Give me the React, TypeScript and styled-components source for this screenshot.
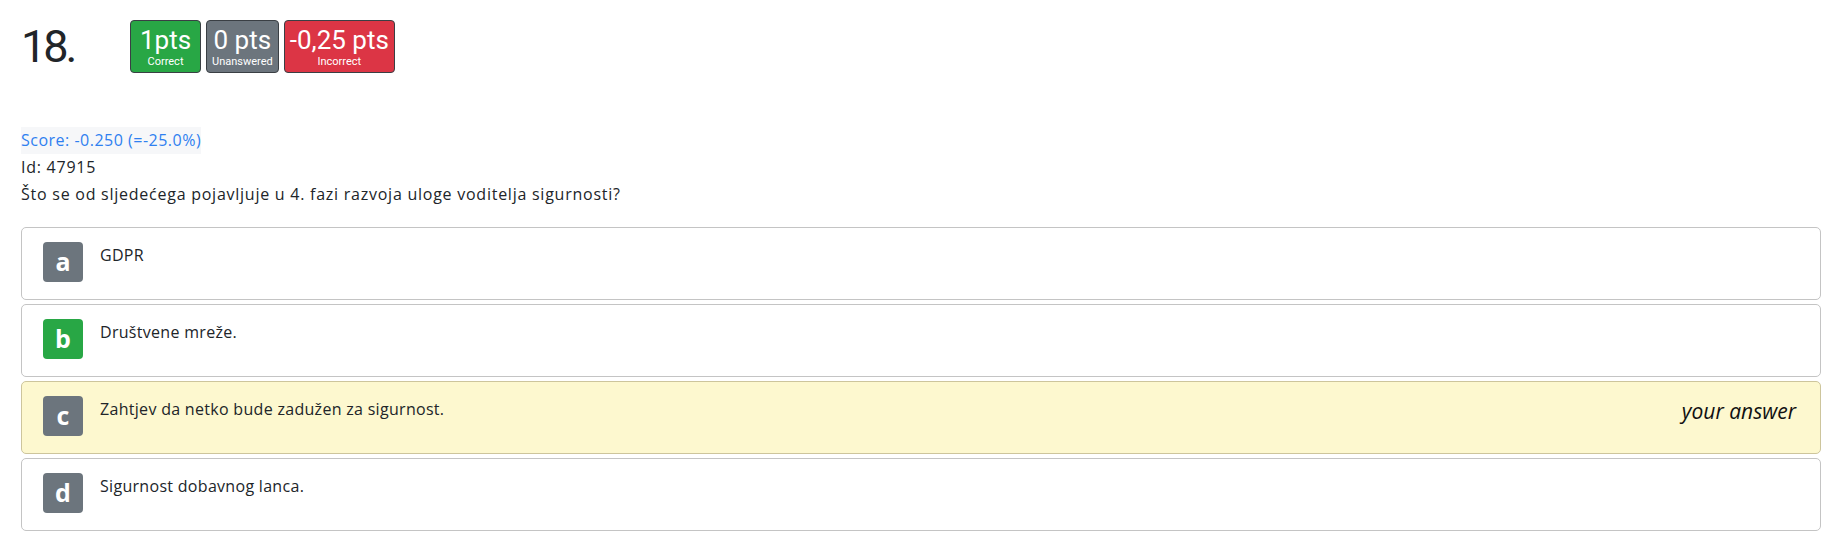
import React from "react";
import styled, { createGlobalStyle } from "styled-components";

const GlobalStyle = createGlobalStyle`
  html, body { margin: 0; padding: 0; background: #fff; }
  body {
    font-family: "Open Sans", "Noto Sans", Arial, sans-serif;
    color: #212529;
    font-size: 16px;
  }
`;

const Page = styled.div`
  padding: 20px 15px 0 21px;
  width: 1800px;
`;

const Header = styled.div`
  display: flex;
  align-items: center;
  height: 53px;
`;

const Title = styled.h1`
  margin: 0;
  width: 109px;
  font-family: Roboto, sans-serif;
  font-weight: 400;
  font-size: 45px;
  letter-spacing: -3px;
  line-height: 53px;
  color: #212529;
`;

const PtsRow = styled.div`
  display: flex;
  gap: 5px;
`;

const PtsBox = styled.div<{ $bg: string; $min?: number }>`
  box-sizing: border-box;
  height: 53px;
  min-width: ${(p) => p.$min ?? 0}px;
  padding: 0 5px;
  display: flex;
  flex-direction: column;
  align-items: center;
  background: ${(p) => p.$bg};
  border: 1px solid #3a3f44;
  border-radius: 4px;
  color: #fff;
  font-family: Roboto, sans-serif;
`;

const PtsValue = styled.div`
  font-size: 26px;
  line-height: 32px;
  margin-top: 3px;
  white-space: nowrap;
`;

const PtsLabel = styled.div`
  font-size: 11px;
  line-height: 12px;
`;

const Info = styled.div`
  margin-top: 54px;
  line-height: 27px;
  font-size: 16px;
  letter-spacing: 0.75px;
`;

const Score = styled.span`
  display: inline-block;
  background: #f6f7f9;
  color: #2f80f0;
  letter-spacing: 0.5px;
`;

const Line = styled.div``;

const Options = styled.div`
  margin-top: 19px;
  display: flex;
  flex-direction: column;
  gap: 4px;
`;

const Option = styled.div<{ $selected?: boolean }>`
  box-sizing: border-box;
  height: 73px;
  display: flex;
  align-items: flex-start;
  padding: 14px 24px 17px 21px;
  border: 1px solid ${(p) => (p.$selected ? "#cdc59c" : "#c4c4c4")};
  border-radius: 5px;
  background: ${(p) => (p.$selected ? "#fdf8cf" : "#fff")};
`;

const Letter = styled.div<{ $correct?: boolean }>`
  flex: none;
  width: 40px;
  height: 40px;
  border-radius: 4px;
  background: ${(p) => (p.$correct ? "#28a745" : "#6c757d")};
  color: #fff;
  font-weight: 700;
  font-size: 25px;
  line-height: 38px;
  text-align: center;
`;

const OptionText = styled.div`
  margin-left: 17px;
  line-height: 27px;
  font-size: 16px;
  letter-spacing: 0.3px;
  flex: 1;
`;

const YourAnswer = styled.div`
  font-family: "Open Sans", sans-serif;
  font-style: italic;
  font-size: 21px;
  line-height: 30px;
  color: #111;
`;

const options = [
  { key: "a", text: "GDPR" },
  { key: "b", text: "Društvene mreže.", correct: true },
  { key: "c", text: "Zahtjev da netko bude zadužen za sigurnost.", selected: true },
  { key: "d", text: "Sigurnost dobavnog lanca." },
];

export default function App() {
  return (
    <>
      <GlobalStyle />
      <Page>
        <Header>
          <Title>18.</Title>
          <PtsRow>
            <PtsBox $bg="#28a745" $min={71}>
              <PtsValue>1pts</PtsValue>
              <PtsLabel>Correct</PtsLabel>
            </PtsBox>
            <PtsBox $bg="#6c757d">
              <PtsValue>0 pts</PtsValue>
              <PtsLabel>Unanswered</PtsLabel>
            </PtsBox>
            <PtsBox $bg="#dc3545">
              <PtsValue>-0,25 pts</PtsValue>
              <PtsLabel>Incorrect</PtsLabel>
            </PtsBox>
          </PtsRow>
        </Header>
        <Info>
          <Score>Score: -0.250 (=-25.0%)</Score>
          <Line>Id: 47915</Line>
          <Line>Što se od sljedećega pojavljuje u 4. fazi razvoja uloge voditelja sigurnosti?</Line>
        </Info>
        <Options>
          {options.map((o) => (
            <Option key={o.key} $selected={o.selected}>
              <Letter $correct={o.correct}>{o.key}</Letter>
              <OptionText>{o.text}</OptionText>
              {o.selected && <YourAnswer>your answer</YourAnswer>}
            </Option>
          ))}
        </Options>
      </Page>
    </>
  );
}
